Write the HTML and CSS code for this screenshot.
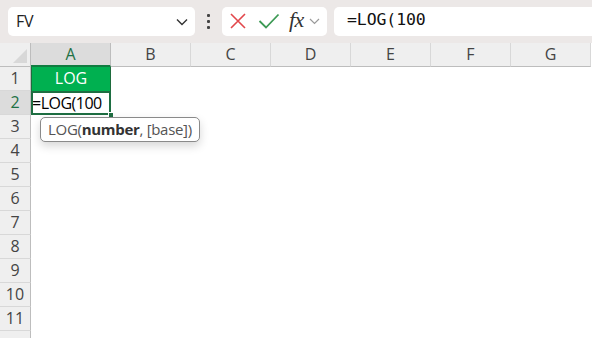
FILE: index.html
```html
<!DOCTYPE html>
<html>
<head>
<meta charset="utf-8">
<link rel="stylesheet" href="styles.css">
</head>
<body>
<div class="toolbar">
  <div class="namebox">
    <span class="name">FV</span>
    <svg class="chev" width="12" height="8" viewBox="0 0 12 8"><path d="M1 1.5 L6 6.5 L11 1.5" fill="none" stroke="#333" stroke-width="1.4"/></svg>
  </div>
  <div class="dots"><span></span><span></span><span></span></div>
  <div class="fxbox">
    <svg class="ico" width="18" height="18" viewBox="0 0 18 18"><path d="M2 2 L16 16 M16 2 L2 16" stroke="#e2474b" stroke-width="1.6" fill="none"/></svg>
    <svg class="ico" width="22" height="18" viewBox="0 0 22 18"><path d="M1.5 9 L8 15.5 L20.5 2.5" stroke="#3d9a55" stroke-width="1.8" fill="none"/></svg>
    <span class="fx">fx</span>
    <svg class="chev2" width="11" height="7" viewBox="0 0 11 7"><path d="M1 1 L5.5 5.5 L10 1" fill="none" stroke="#9a9a9a" stroke-width="1.2"/></svg>
  </div>
  <div class="formula">=LOG(100</div>
</div>
<div class="sheet">
  <div class="corner"><span class="tri"></span></div>
  <div class="ch active">A</div>
  <div class="ch">B</div>
  <div class="ch">C</div>
  <div class="ch">D</div>
  <div class="ch">E</div>
  <div class="ch">F</div>
  <div class="ch">G</div>

  <div class="rh">1</div>
  <div class="cell green">LOG</div>
  <div class="cell"></div><div class="cell"></div><div class="cell"></div><div class="cell"></div><div class="cell"></div><div class="cell"></div>

  <div class="rh active">2</div>
  <div class="cell editing">=LOG(100
    <span class="handle"></span>
    <div class="tip">LOG(<b>number</b>, [base])</div>
  </div>
  <div class="cell"></div><div class="cell"></div><div class="cell"></div><div class="cell"></div><div class="cell"></div><div class="cell"></div>

  <div class="rh">3</div><div class="cell span"></div>
  <div class="rh">4</div><div class="cell span"></div>
  <div class="rh">5</div><div class="cell span"></div>
  <div class="rh">6</div><div class="cell span"></div>
  <div class="rh">7</div><div class="cell span"></div>
  <div class="rh">8</div><div class="cell span"></div>
  <div class="rh">9</div><div class="cell span"></div>
  <div class="rh">10</div><div class="cell span"></div>
  <div class="rh">11</div><div class="cell span"></div>
  <div class="rh"></div><div class="cell span"></div>
</div>
</body>
</html>
```
FILE: styles.css
```css
* { box-sizing: border-box; }
html, body { margin: 0; padding: 0; background: #fff; overflow: hidden; }
body { font-family: "Open Sans", "Noto Sans", sans-serif; width: 592px; height: 338px; }

.toolbar {
  height: 43px;
  background: #ece8e7;
  display: flex;
  align-items: center;
  padding: 0 0 1px 8px;
}
.namebox {
  width: 187px;
  height: 29px;
  background: #fff;
  border-radius: 5px;
  display: flex;
  align-items: center;
  justify-content: space-between;
  padding: 0 7px 0 8px;
}
.name { font-size: 16px; color: #222; letter-spacing: -0.3px; }
.chev { margin-top: 1px; }
.dots {
  width: 27px;
  display: flex;
  flex-direction: column;
  align-items: center;
  gap: 3px;
}
.dots span { width: 3px; height: 3px; background: #444; border-radius: 1px; }
.fxbox {
  width: 105px;
  height: 29px;
  background: #fff;
  border-radius: 5px;
  display: flex;
  align-items: center;
  padding: 0 0 0 7px;
}
.fxbox .ico:first-child { margin-right: 11px; }
.fx {
  font-family: "Liberation Serif", "DejaVu Serif", serif;
  font-style: italic;
  font-size: 22px;
  color: #333;
  margin-left: 9px;
  letter-spacing: -0.5px;
  line-height: 1;
  margin-top: -3px;
}
.chev2 { margin-left: 5px; }
.formula {
  margin-left: 7px;
  flex: 1;
  height: 29px;
  background: #fff;
  border-radius: 5px 0 0 5px;
  font-family: "DejaVu Sans Mono", monospace;
  font-size: 16.5px;
  color: #111;
  padding: 3px 0 0 13px;
  letter-spacing: -0.1px;
}

.sheet {
  display: grid;
  grid-template-columns: 31px repeat(7, 80px);
  grid-template-rows: 24px repeat(12, 24px);
}
.corner {
  background: #efefef;
  border-right: 1px solid #bdbdbd;
  border-bottom: 1px solid #bdbdbd;
  position: relative;
}
.tri {
  position: absolute;
  right: 3px;
  bottom: 3px;
  width: 0; height: 0;
  border-left: 14px solid transparent;
  border-bottom: 14px solid #d8d8d8;
}
.ch {
  background: #efefef;
  border-right: 1px solid #d8d8d8;
  border-bottom: 1px solid #bdbdbd;
  text-align: center;
  font-size: 16px;
  line-height: 23px;
  color: #444;
}
.ch.active {
  background: #dcdcdc;
  color: #1e7145;
  border-bottom: 2px solid #107c41;
  border-right-color: #bdbdbd;
}
.rh {
  background: #efefef;
  border-right: 1px solid #bdbdbd;
  border-bottom: 1px solid #d8d8d8;
  text-align: center;
  font-size: 16px;
  line-height: 23px;
  color: #444;
}
.rh.active { background: #dcdcdc; color: #1e7145; }
.cell { background: #fff; font-size: 16px; line-height: 24px; }
.cell.span { grid-column: 2 / span 7; }
.cell.green {
  background: #00b050;
  color: #fff;
  text-align: center;
  border-left: 1px solid #1e6b3d;
  border-right: 1px solid #1e6b3d;
  line-height: 22px;
}
.cell.editing {
  position: relative;
  outline: 2px solid #1e6e42;
  outline-offset: -2px;
  color: #000;
  padding-left: 1px;
  letter-spacing: -0.5px;
  white-space: nowrap;
  z-index: 2;
}
.handle {
  position: absolute;
  right: -3px;
  bottom: -3px;
  width: 6px;
  height: 6px;
  background: #1e6e42;
  border: 1px solid #fff;
}
.tip {
  position: absolute;
  left: 9px;
  top: 26px;
  width: 160px;
  height: 25px;
  background: #fff;
  border: 1px solid #8a8a8a;
  border-radius: 5px;
  box-shadow: 0 4px 10px rgba(0,0,0,0.16);
  font-size: 15px;
  line-height: 22px;
  color: #555;
  padding-left: 7px;
  letter-spacing: -0.3px;
}
.tip b { color: #333; font-weight: 700; }
```
